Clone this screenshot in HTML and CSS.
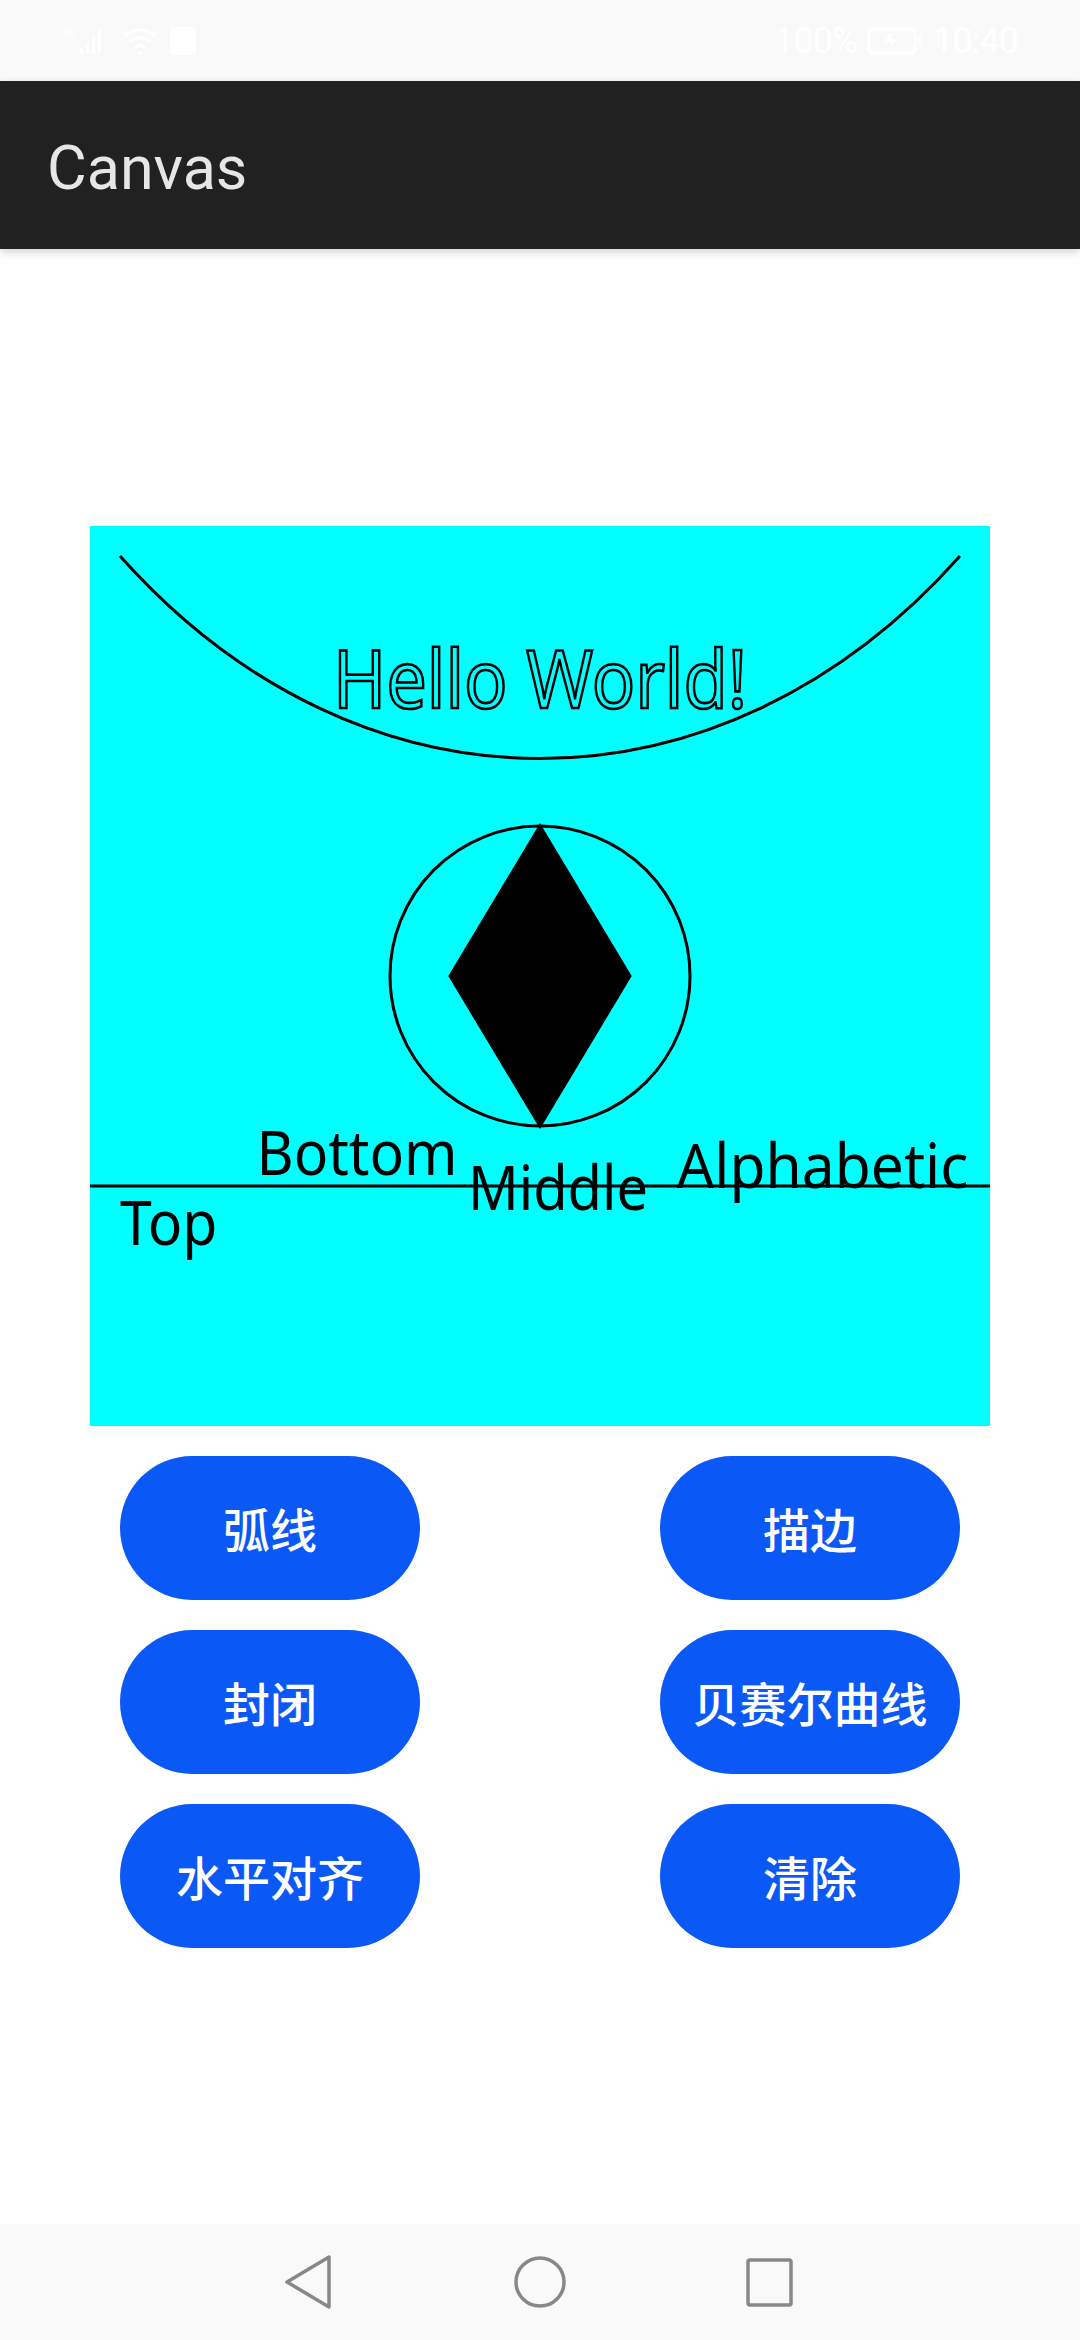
FILE: index.html
```html
<!DOCTYPE html>
<html lang="zh">
<head>
<meta charset="utf-8">
<title>Canvas</title>
<link rel="stylesheet" href="styles.css">
</head>
<body>
<div class="screen">
  <div class="statusbar">
    <div class="sb-left">
      <svg class="sb-signal" width="50" height="30" viewBox="0 0 50 30">
        <text x="0" y="10" class="sb-tiny">4G</text>
        <rect x="18" y="22" width="3" height="6" class="sb-fill"/>
        <rect x="24" y="17" width="3" height="11" class="sb-fill"/>
        <rect x="30" y="11" width="3" height="17" class="sb-fill"/>
        <rect x="36" y="4" width="3" height="24" class="sb-fill"/>
      </svg>
      <svg class="sb-wifi" width="36" height="30" viewBox="0 0 36 30">
        <path d="M3 10 Q18 -2 33 10" class="sb-stroke"/>
        <path d="M8 16 Q18 7 28 16" class="sb-stroke"/>
        <path d="M13 22 Q18 17 23 22" class="sb-stroke"/>
        <circle cx="18" cy="27" r="2.5" class="sb-fill"/>
      </svg>
      <svg class="sb-card" width="30" height="30" viewBox="0 0 30 30">
        <rect x="2" y="1" width="26" height="28" rx="3" class="sb-fill"/>
      </svg>
    </div>
    <div class="sb-right">
      <span class="sb-text">100%</span>
      <svg class="sb-battery" width="56" height="30" viewBox="0 0 56 30">
        <rect x="2" y="3" width="46" height="24" rx="4" class="sb-stroke"/>
        <rect x="51" y="10" width="3" height="10" class="sb-fill"/>
        <path d="M22 8 L18 16 L25 16 L22 22 L31 13 L24 13 L27 8 Z" class="sb-fill"/>
      </svg>
      <span class="sb-text">10:40</span>
    </div>
  </div>

  <header class="appbar">
    <h1 class="title">Canvas</h1>
  </header>

  <main class="content">
    <svg class="board" width="900" height="900" viewBox="0 0 300 300">
      <rect x="0" y="0" width="300" height="300" class="board-bg"/>
      <path d="M10 10 C90 100 210 100 290 10" class="ink-line"/>
      <text x="81" y="60.8" class="hello" textLength="138" lengthAdjust="spacingAndGlyphs">Hello World!</text>
      <circle cx="150" cy="150" r="50" class="ink-line"/>
      <path d="M150 100 L180 150 L150 200 L120 150 Z" class="ink-solid"/>
      <line x1="0" y1="220" x2="300" y2="220" class="ink-line"/>
      <text x="10" y="239.7" class="label" textLength="32.5" lengthAdjust="spacingAndGlyphs">Top</text>
      <text x="55.5" y="216.4" class="label" textLength="67" lengthAdjust="spacingAndGlyphs">Bottom</text>
      <text x="126" y="228.1" class="label" textLength="60" lengthAdjust="spacingAndGlyphs">Middle</text>
      <text x="195.6" y="220.6" class="label" textLength="97.2" lengthAdjust="spacingAndGlyphs">Alphabetic</text>
    </svg>

    <div class="buttons">
      <button class="btn">弧线</button>
      <button class="btn">描边</button>
      <button class="btn">封闭</button>
      <button class="btn">贝赛尔曲线</button>
      <button class="btn">水平对齐</button>
      <button class="btn">清除</button>
    </div>
  </main>

  <nav class="navbar">
    <svg class="nav-icon" width="60" height="60" viewBox="0 0 60 60">
      <path d="M50 5 L50 55 L8 30 Z" class="nav-stroke"/>
    </svg>
    <svg class="nav-icon" width="60" height="60" viewBox="0 0 60 60">
      <circle cx="30" cy="30" r="24" class="nav-stroke"/>
    </svg>
    <svg class="nav-icon" width="60" height="60" viewBox="0 0 60 60">
      <rect x="7" y="8" width="43" height="45" rx="2" class="nav-stroke"/>
    </svg>
  </nav>
</div>
</body>
</html>
```

FILE: styles.css
```css
html, body {
  margin: 0;
  padding: 0;
  background: #ffffff;
}

.screen {
  width: 1080px;
  height: 2340px;
  display: flex;
  flex-direction: column;
  background: #ffffff;
  overflow: hidden;
  font-family: Roboto, "Noto Sans", "Noto Sans CJK SC", sans-serif;
}

/* status bar */
.statusbar {
  height: 81px;
  flex: 0 0 81px;
  background: #f9f9f9;
  display: flex;
  align-items: center;
  justify-content: space-between;
  padding: 0 62px 0 62px;
  box-sizing: border-box;
}

.sb-left, .sb-right {
  display: flex;
  align-items: center;
  gap: 10px;
}

.sb-fill { fill: #ffffff; }
.sb-stroke { fill: none; stroke: #ffffff; stroke-width: 3; }
.sb-tiny { fill: #ffffff; font-size: 10px; font-family: Roboto, sans-serif; }

.sb-text {
  color: #ffffff;
  font-size: 36px;
  font-family: Roboto, sans-serif;
  letter-spacing: -1px;
}

/* app bar */
.appbar {
  height: 168px;
  flex: 0 0 168px;
  background: #212121;
  display: flex;
  align-items: center;
  padding-left: 47px;
  box-sizing: border-box;
  box-shadow: 0 3px 8px rgba(0, 0, 0, 0.18);
  position: relative;
  z-index: 1;
}

.title {
  margin: 0;
  font-family: Roboto, sans-serif;
  font-weight: 400;
  font-size: 61px;
  color: #e6e6e6;
  line-height: 1;
  padding-top: 6px;
}

/* content */
.content {
  flex: 1 1 auto;
  display: flex;
  flex-direction: column;
  align-items: center;
  justify-content: center;
}

.board {
  display: block;
  width: 900px;
  height: 900px;
}

.board-bg { fill: #00ffff; }

.ink-line {
  fill: none;
  stroke: #000000;
  stroke-width: 1;
}

.ink-solid {
  fill: #000000;
  stroke: #000000;
  stroke-width: 1;
  stroke-linejoin: miter;
}

.hello {
  font-family: "Noto Sans", "Liberation Sans", sans-serif;
  font-size: 27px;
  fill: none;
  stroke: #000000;
  stroke-width: 0.9;
}

.label {
  font-family: "Noto Sans", "Liberation Sans", sans-serif;
  font-size: 20.5px;
  fill: #000000;
}

.buttons {
  width: 900px;
  box-sizing: border-box;
  padding: 30px 30px 0 30px;
  display: grid;
  grid-template-columns: 300px 300px;
  justify-content: space-between;
  row-gap: 30px;
}

.btn {
  width: 300px;
  height: 144px;
  border: none;
  border-radius: 72px;
  background: #0a59f7;
  color: #ffffff;
  font-family: "Noto Sans CJK SC", sans-serif;
  font-weight: 500;
  font-size: 47px;
  padding: 0;
  margin: 0;
  display: flex;
  align-items: center;
  justify-content: center;
}

/* navigation bar */
.navbar {
  height: 116px;
  flex: 0 0 116px;
  background: #f9f9f9;
  display: flex;
  align-items: center;
  justify-content: center;
  gap: 171px;
}

.nav-icon { display: block; }

.nav-stroke {
  fill: none;
  stroke: #888888;
  stroke-width: 3.5;
  stroke-linejoin: round;
}
```
